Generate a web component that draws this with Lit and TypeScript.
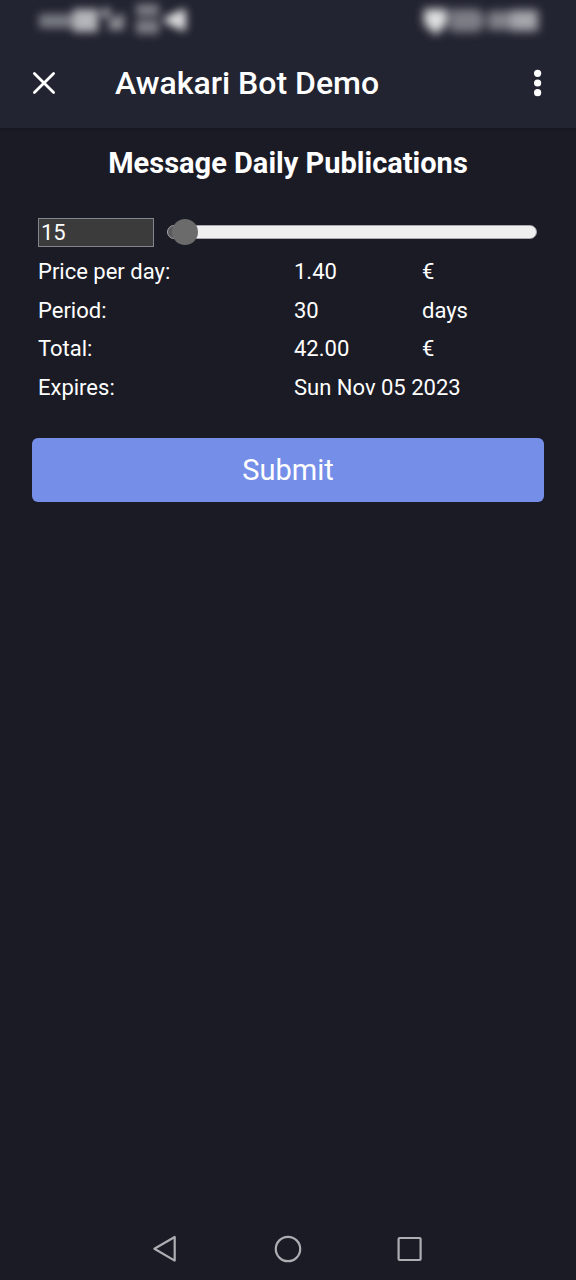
import { LitElement, html, css } from "lit";
import { customElement, state } from "lit/decorators.js";

@customElement("status-bar")
class StatusBar extends LitElement {
  static styles = css`
    :host {
      display: flex;
      justify-content: space-between;
      height: 40px;
      padding: 0 32px 0 28px;
    }
    svg {
      display: block;
      overflow: visible;
    }
    .soft {
      filter: blur(5px);
    }
    .soft-thin {
      filter: blur(4px);
    }
  `;

  render() {
    return html`
      <svg width="168" height="40" viewBox="28 0 168 40" aria-hidden="true">
        <g class="soft-thin" fill="#b4b5ba">
          <rect x="39" y="14" width="34" height="14" opacity=".6" />
          <rect x="73" y="9" width="25" height="23" />
          <path d="M101 8h10v10h-10zM110 18h5l9-6v18h-16z" opacity=".75" />
          <path d="M136 4h23v12h-23zM136 20h23v14h-23z" opacity=".62" />
          <path d="M186 9v22l-8-2-14-7v-4l14-7z" fill="#dcdcde" />
        </g>
      </svg>
      <svg width="124" height="40" viewBox="420 0 124 40" aria-hidden="true">
        <g class="soft" fill="#b4b5ba">
          <path d="M424 9h23v15l-11 11-12-11z" fill="#dedfe0" />
          <path d="M450 9h29l5 7v9l-5 7h-29z" opacity=".62" />
          <rect x="488" y="11" width="23" height="19" opacity=".65" />
          <rect x="511" y="10" width="27" height="21" opacity=".9" />
        </g>
      </svg>
    `;
  }
}

@customElement("app-root")
class AppRoot extends LitElement {
  @state() private count = 15;

  static styles = css`
    :host {
      display: flex;
      flex-direction: column;
      min-height: 100vh;
      background: #1b1b26;
      color: #fff;
      font-family: Roboto, "Noto Sans", sans-serif;
      font-size: 22px;
      line-height: 28px;
    }
    * {
      box-sizing: border-box;
    }
    button {
      margin: 0;
      padding: 0;
      border: 0;
      background: none;
      color: inherit;
      font: inherit;
      cursor: pointer;
    }
    svg {
      display: block;
    }
    .top {
      background: #222431;
      box-shadow: 0 1px 3px #15151e;
    }
    .toolbar {
      display: flex;
      align-items: center;
      height: 88px;
      padding: 0 24px 2px;
    }
    .icon-button {
      display: grid;
      place-items: center;
      width: 40px;
      height: 48px;
    }
    .title {
      flex: 1;
      margin: 0 0 0 51px;
      font-size: 32px;
      line-height: 40px;
      font-weight: 500;
    }
    .menu {
      width: 28px;
    }
    .content {
      flex: 1;
      padding: 16px 32px;
    }
    .heading {
      margin: 0 0 34px;
      font-size: 29px;
      line-height: 38px;
      font-weight: 700;
      text-align: center;
    }
    .amount {
      display: flex;
      align-items: center;
      gap: 13px;
      padding: 0 7px 0 6px;
      height: 32px;
    }
    .number {
      width: 116px;
      height: 29px;
      margin: 0;
      padding: 0 2px;
      border: 1px solid #85858f;
      border-radius: 0;
      background: #3b3b3b;
      color: #fff;
      font: inherit;
      appearance: textfield;
    }
    .number::-webkit-inner-spin-button {
      appearance: none;
      margin: 0;
    }
    .range {
      flex: 1;
      min-width: 0;
      height: 26px;
      margin: 0;
      appearance: none;
      background: none;
    }
    .range::-webkit-slider-runnable-track {
      height: 14px;
      border: 1px solid #a9a9ad;
      border-radius: 7px;
      background: linear-gradient(to right, #5b5b5e 12px, #efefef 12px);
    }
    .range::-webkit-slider-thumb {
      appearance: none;
      width: 26px;
      height: 26px;
      margin-top: -7px;
      border-radius: 50%;
      background: #6b6b6b;
    }
    .summary {
      width: 100%;
      height: 154px;
      margin: 5px 0 31px;
      border-collapse: collapse;
      table-layout: fixed;
    }
    .summary th,
    .summary td {
      padding: 0 6px;
      font-weight: 400;
      text-align: left;
    }
    .label-column {
      width: 50%;
    }
    .value-column {
      width: 25%;
    }
    .submit {
      display: block;
      width: 100%;
      height: 64px;
      border-radius: 6px;
      background: #758fe9;
      font-size: 29px;
    }
    .navigation {
      display: flex;
      justify-content: center;
      gap: 82px;
      padding: 14px 0 7px;
    }
  `;

  private update_count(event: Event) {
    this.count = Number((event.target as HTMLInputElement).value);
  }

  render() {
    return html`
      <header class="top">
        <status-bar></status-bar>
        <div class="toolbar">
          <button class="icon-button" aria-label="Close">
            <svg width="24" height="24" viewBox="0 0 24 24" fill="none" stroke="#fff" stroke-width="2.8" stroke-linecap="round">
              <path d="M2.4 2.4l19.2 19.2M21.6 2.4L2.4 21.6" />
            </svg>
          </button>
          <h1 class="title">Awakari Bot Demo</h1>
          <button class="icon-button menu" aria-label="More options">
            <svg width="8" height="28" viewBox="0 0 8 28" fill="#fff">
              <circle cx="3.6" cy="4.3" r="3.6" />
              <circle cx="3.6" cy="14" r="3.6" />
              <circle cx="3.6" cy="23.7" r="3.6" />
            </svg>
          </button>
        </div>
      </header>
      <main class="content">
        <h2 class="heading" id="heading">Message Daily Publications</h2>
        <div class="amount">
          <input class="number" type="number" min="1" max="1200" aria-labelledby="heading" .value=${String(this.count)} @input=${this.update_count} />
          <input class="range" type="range" min="1" max="1200" aria-labelledby="heading" .value=${String(this.count)} @input=${this.update_count} />
        </div>
        <table class="summary">
          <colgroup>
            <col class="label-column" />
            <col class="value-column" />
            <col class="value-column" />
          </colgroup>
          <tbody>
            <tr><th scope="row">Price per day:</th><td>1.40</td><td>€</td></tr>
            <tr><th scope="row">Period:</th><td>30</td><td>days</td></tr>
            <tr><th scope="row">Total:</th><td>42.00</td><td>€</td></tr>
            <tr><th scope="row">Expires:</th><td colspan="2">Sun Nov 05 2023</td></tr>
          </tbody>
        </table>
        <button class="submit">Submit</button>
      </main>
      <nav class="navigation" aria-label="System">
        <button class="icon-button nav" aria-label="Back">
          <svg width="28" height="28" viewBox="0 0 28 28" fill="none" stroke="#adadb2" stroke-width="2.2" stroke-linejoin="round">
            <path d="M22.7 2v23.6L2.4 13.8z" />
          </svg>
        </button>
        <button class="icon-button nav" aria-label="Home">
          <svg width="28" height="28" viewBox="0 0 28 28" fill="none" stroke="#adadb2" stroke-width="2.2">
            <circle cx="14" cy="14" r="12.2" />
          </svg>
        </button>
        <button class="icon-button nav" aria-label="Recent apps">
          <svg width="28" height="28" viewBox="0 0 28 28" fill="none" stroke="#adadb2" stroke-width="2.2">
            <rect x="2.6" y="3" width="22" height="22" rx="1" />
          </svg>
        </button>
      </nav>
    `;
  }
}
